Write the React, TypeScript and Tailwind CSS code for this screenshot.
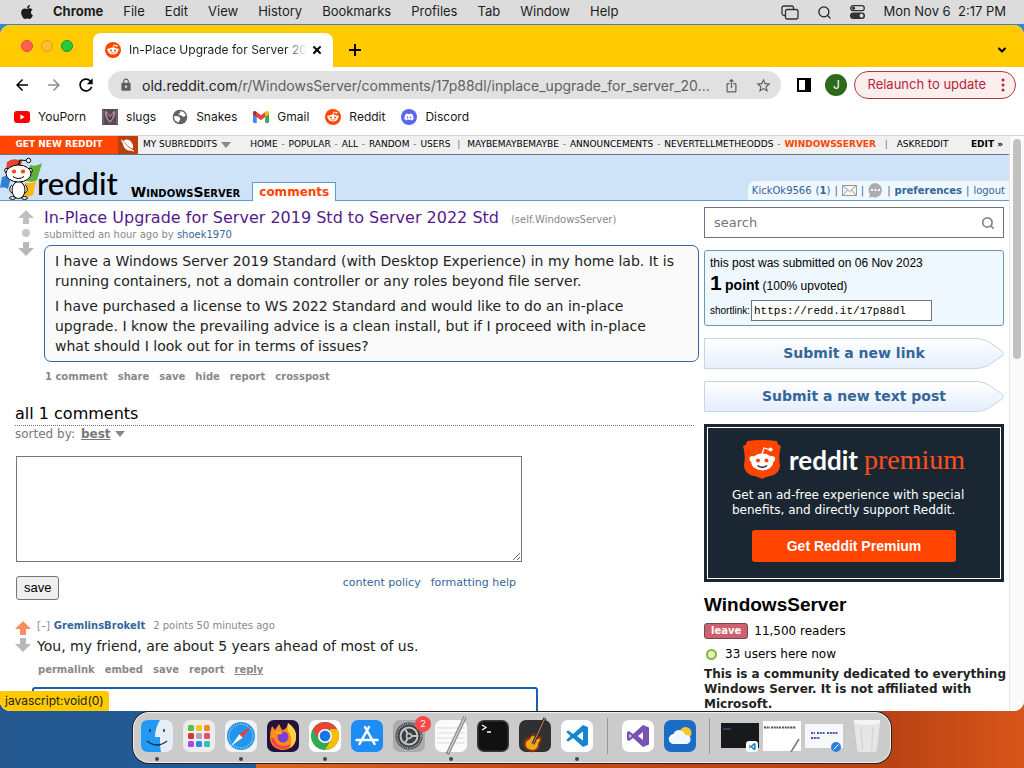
import type { ReactNode } from 'react'
import { ChevronDown, Search, X } from 'lucide-react'
import { FaApple, FaDiscord } from 'react-icons/fa'
import {
  MdArrowBack,
  MdArrowForward,
  MdIosShare,
  MdLock,
  MdRefresh,
  MdStarBorder,
} from 'react-icons/md'

const MENUS = [
  'File',
  'Edit',
  'View',
  'History',
  'Bookmarks',
  'Profiles',
  'Tab',
  'Window',
  'Help',
]

function RedditIcon({ className }: { className?: string }) {
  return (
    <svg viewBox="0 0 16 16" className={className} aria-hidden="true">
      <circle cx="8" cy="8" r="8" fill="#ff4500" />
      <path
        d="M8 6 8.8 3l2.4.6"
        fill="none"
        stroke="#fff"
        strokeWidth=".8"
      />
      <circle cx="11.500" cy="3.700" r="1" fill="#fff" />
      <circle cx="3.500" cy="7.700" r="1.300" fill="#fff" />
      <circle cx="12.500" cy="7.700" r="1.300" fill="#fff" />
      <ellipse cx="8" cy="9" rx="5" ry="3.500" fill="#fff" />
      <circle cx="6" cy="8.400" r="1" fill="#ff4500" />
      <circle cx="10" cy="8.400" r="1" fill="#ff4500" />
      <path
        d="M5.8 10.5q2.2 1.4 4.4 0"
        fill="none"
        stroke="#ff4500"
        strokeWidth=".7"
      />
    </svg>
  )
}

function MenuBar() {
  return (
    <header className="flex h-6 shrink-0 items-center bg-[#dcdcdc] pr-[18px] pl-[19px] text-[13px] text-[#1c1c1c]">
      <FaApple className="h-4 w-4" />
      <nav className="flex items-center gap-5 pl-[18px]">
        <button type="button" className="font-bold">
          Chrome
        </button>
        {MENUS.map((name) => (
          <button key={name} type="button">
            {name}
          </button>
        ))}
      </nav>
      <div className="ml-auto flex items-center gap-[18px]">
        <svg viewBox="0 0 18 15" className="h-[15px] w-[18px]" fill="none" stroke="#333" strokeWidth="1.3" aria-hidden="true">
          <path d="M4 10.5H3a2 2 0 0 1-2-2V3a2 2 0 0 1 2-2h7.500a2 2 0 0 1 2 2v1" />
          <rect x="4.500" y="4.500" width="12.500" height="9.500" rx="2" />
        </svg>
        <Search className="h-[15px] w-[15px]" />
        <svg viewBox="0 0 15 14" className="h-[14px] w-[15px]" aria-hidden="true">
          <rect x=".7" y=".7" width="13.600" height="5" rx="2.500" fill="none" stroke="#333" strokeWidth="1.300" />
          <circle cx="3.500" cy="3.200" r="1.600" fill="#333" />
          <rect x="0" y="7.500" width="15" height="6.500" rx="3.200" fill="#333" />
          <circle cx="11.500" cy="10.700" r="1.900" fill="#ddd" />
        </svg>
        <span className="whitespace-pre">Mon Nov 6  2:17 PM</span>
      </div>
    </header>
  )
}

function TabStrip() {
  return (
    <div className="flex h-[42px] items-end bg-[#ffcb00]">
      <div className="flex items-center gap-2 self-center pl-[21px]">
        <span className="h-3 w-3 rounded-full border border-[#e2453d] bg-[#ff5f57]" />
        <span className="h-3 w-3 rounded-full border border-[#e79b1d] bg-[#febc2e]" />
        <span className="h-3 w-3 rounded-full border border-[#159a26] bg-[#28c840]" />
      </div>
      <div className="ml-5 flex h-[34px] w-60 items-center rounded-t-lg bg-white pr-[10px] pl-3 text-xs text-[#1f2022]">
        <RedditIcon className="h-4 w-4 shrink-0" />
        <span className="ml-2 min-w-0 flex-1 whitespace-nowrap [mask-image:linear-gradient(to_right,black_88%,transparent)]">
          In-Place Upgrade for Server 20
        </span>
        <button type="button" aria-label="Close tab" className="ml-1">
          <X className="h-3 w-3 text-black" strokeWidth={4} />
        </button>
      </div>
      <button type="button" aria-label="New tab" className="mb-[11px] ml-4">
        <svg viewBox="0 0 12 12" className="h-3 w-3" aria-hidden="true">
          <path d="M6 0v12M0 6h12" stroke="#000" strokeWidth="2" />
        </svg>
      </button>
      <button type="button" aria-label="Search tabs" className="mr-4 mb-[11px] ml-auto">
        <ChevronDown className="h-3 w-3 text-black" strokeWidth={4} />
      </button>
    </div>
  )
}

function Toolbar() {
  return (
    <div className="flex h-9 items-center pr-2 pl-[13px]">
      <button type="button" aria-label="Back" className="mr-[14px]">
        <MdArrowBack className="h-[18px] w-[18px] text-black" />
      </button>
      <button type="button" aria-label="Forward" className="mr-[13px]">
        <MdArrowForward className="h-[18px] w-[18px] text-[#8d8d8d]" />
      </button>
      <button type="button" aria-label="Reload">
        <MdRefresh className="h-5 w-5 text-black" />
      </button>
      <div className="ml-3 flex h-7 min-w-0 flex-1 items-center rounded-full bg-[#e1e1e1] pr-[9px] pl-[11px] text-[#5f6062]">
        <MdLock className="h-[14px] w-[14px] shrink-0" />
        <p className="min-w-0 flex-1 truncate pl-[9px] text-[14px]">
          <span className="text-[#202124]">old.reddit.com</span>
          /r/WindowsServer/comments/17p88dl/inplace_upgrade_for_server_20...
        </p>
        <button type="button" aria-label="Share">
          <MdIosShare className="h-[15px] w-[15px]" />
        </button>
        <button type="button" aria-label="Bookmark this tab" className="ml-4">
          <MdStarBorder className="h-[17px] w-[17px]" />
        </button>
      </div>
      <button type="button" aria-label="Side panel" className="ml-4">
        <svg viewBox="0 0 14 14" className="h-[14px] w-[14px]" aria-hidden="true">
          <path d="M0 0h14v14H0zM2 2v10h6V2z" fill="#000" fillRule="evenodd" />
        </svg>
      </button>
      <button type="button" className="ml-[14px] h-[22px] w-[22px] rounded-full bg-[#2d6a1e] text-xs text-white">
        J
      </button>
      <button type="button" className="ml-[7px] flex h-7 items-center rounded-full border border-[#b93345] bg-[#fdeeee] pr-[10px] pl-[12px] text-[13px] text-[#b3263a]">
        Relaunch to update
        <svg viewBox="0 0 4 14" className="ml-[15px] h-[14px] w-1" fill="#b3263a" aria-hidden="true">
          <circle cx="2" cy="2" r="1.500" />
          <circle cx="2" cy="7" r="1.500" />
          <circle cx="2" cy="12" r="1.500" />
        </svg>
      </button>
    </div>
  )
}

function Bookmark({ label, children }: { label: string; children: ReactNode }) {
  return (
    <a href="#" className="flex items-center gap-2">
      {children}
      {label}
    </a>
  )
}

function Bookmarks() {
  return (
    <nav className="flex h-[33px] items-center gap-4 border-b border-[#d4d4d4] pb-1 pl-[14px] text-xs text-[#161616]">
      <Bookmark label="YouPorn">
        <svg viewBox="0 0 16 12" className="h-3 w-4" aria-hidden="true">
          <rect width="16" height="12" rx="3" fill="#f00" />
          <path d="m6.400 3.500 4.300 2.500-4.300 2.500z" fill="#fff" />
        </svg>
      </Bookmark>
      <Bookmark label="slugs">
        <svg viewBox="0 0 16 16" className="h-4 w-4" aria-hidden="true">
          <rect width="16" height="16" fill="#5b4a55" />
          <path d="M3 2c2 0 3 2 5 5 2-3 3-5 5-5 1 4-2 9-5 12C5 11 2 6 3 2z" fill="#a98c98" />
          <path d="M5 4c0 3 1 6 3 8 2-2 3-5 3-8L8 9z" fill="#4b3440" />
          <path d="M1 1v14M15 1v14" stroke="#857680" />
        </svg>
      </Bookmark>
      <Bookmark label="Snakes">
        <svg viewBox="0 0 16 16" className="h-4 w-4" aria-hidden="true">
          <circle cx="8" cy="8" r="7.300" fill="#5f6368" />
          <path d="M2 7.500c3-1 5 0 6 1.500s-1 2-1 4.500C4 13 2 11 2 7.500z" fill="#fff" />
          <path d="M8 2.200c3 0 5 1.500 5.800 4.300-1.500 2-3.300 1-4.300.2S7 6 6 5c1.500-.3 2.500-1 2-2.800z" fill="#fff" />
        </svg>
      </Bookmark>
      <Bookmark label="Gmail">
        <svg viewBox="0 0 16 12" className="h-3 w-4" aria-hidden="true">
          <path d="M0 2v8.500c0 .8.500 1.500 1.300 1.500h2.500V5z" fill="#4285f4" />
          <path d="M16 2v8.500c0 .8-.5 1.500-1.300 1.500h-2.500V5z" fill="#34a853" />
          <path d="M12.200 1v5L16 3V1.800C16 0 14.300-.4 13.200.4z" fill="#fbbc04" />
          <path d="M3.800 1 8 4.200 12.200 1v5L8 9.200 3.800 6z" fill="#ea4335" />
          <path d="M0 1.800V3l3.800 3V1l-.9-.6C1.700-.4 0 0 0 1.800z" fill="#c5221f" />
        </svg>
      </Bookmark>
      <Bookmark label="Reddit">
        <RedditIcon className="h-4 w-4" />
      </Bookmark>
      <Bookmark label="Discord">
        <span className="flex h-4 w-4 items-center justify-center rounded-full bg-[#5865f2] text-white">
          <FaDiscord className="h-[10px] w-[10px]" />
        </span>
      </Bookmark>
    </nav>
  )
}

function Dash() {
  return <span className="px-px text-gray-500"> - </span>
}

function SubredditBar() {
  return (
    <div className="flex h-[19px] items-center border-b border-gray-500 bg-[#f0f0f0] text-[9px] whitespace-nowrap text-black uppercase">
      <a href="#" className="flex h-full w-[118px] items-center justify-center bg-[#ff4500] font-bold text-white">
        get new reddit
      </a>
      <span className="flex h-full w-5 items-center justify-center bg-[#b8400f]">
        <svg viewBox="0 0 16 16" className="h-4 w-4" aria-hidden="true">
          <ellipse cx="8" cy="8" rx="4.500" ry="6" transform="rotate(-35 8 8)" fill="#fff" />
          <path d="M2 2.500C1 5 9 13 14 14" fill="none" stroke="#fff" strokeWidth="1.200" />
          <path d="M4.500 5.500c2 3 5 5.500 8 6.500" fill="none" stroke="#d9511f" strokeWidth=".9" />
        </svg>
      </span>
      <button type="button" className="flex items-center gap-1 pl-[5px] uppercase">
        my subreddits
        <svg viewBox="0 0 10 6" className="h-[6px] w-[10px]" fill="#888" aria-hidden="true">
          <path d="M0 0h10L5 6z" />
        </svg>
      </button>
      <nav className="min-w-0 flex-1 overflow-hidden pl-[19px] whitespace-pre">
        <a href="#">home</a>
        <Dash />
        <a href="#">popular</a>
        <Dash />
        <a href="#">all</a>
        <Dash />
        <a href="#">random</a>
        <Dash />
        <a href="#">users</a>
        <span className="px-1 text-gray-500"> | </span>
        <a href="#">maybemaybemaybe</a>
        <Dash />
        <a href="#">announcements</a>
        <Dash />
        <a href="#">nevertellmetheodds</a>
        <Dash />
        <a href="#" className="font-bold text-[#ff4500]">
          windowsserver
        </a>
        <span className="px-[6px] text-gray-500"> | </span>
        <a href="#">askreddit</a>
      </nav>
      <a href="#" className="pr-[6px] pl-3 font-bold">
        edit »
      </a>
    </div>
  )
}

function SnooLogo() {
  return (
    <svg viewBox="0 0 42 44" className="h-11 w-[42px]" aria-hidden="true">
      <path d="M7 6q6-5 15-1l-2 9q-8-2-14 1z" fill="#e8432c" />
      <path d="M30 9q6 2 12-2l-5 17q-4 3-10 1z" fill="#5fae3a" />
      <path d="M2 21q5-2 9 0l-3 12q-4-3-8-1z" fill="#2f7fd2" />
      <path d="M25 26q5 3 11-1l-3 14q-4 3-9 1z" fill="#fdb813" />
      <path d="M18.500 9 20 4l6 .5" fill="none" stroke="#000" strokeWidth="1.100" />
      <circle cx="28.500" cy="4.500" r="2.200" fill="#fff" stroke="#000" />
      <ellipse cx="12.500" cy="42" rx="3" ry="1.400" fill="#fff" stroke="#000" />
      <ellipse cx="24.500" cy="42" rx="3" ry="1.400" fill="#fff" stroke="#000" />
      <path d="M12 29c-3 2-3 7 0 8M25 29c3 2 3 7 0 8" fill="#fff" stroke="#000" />
      <ellipse cx="18.500" cy="34" rx="6.500" ry="8.500" fill="#fff" stroke="#000" />
      <circle cx="7" cy="14.500" r="2.300" fill="#fff" stroke="#000" />
      <circle cx="30" cy="14.500" r="2.300" fill="#fff" stroke="#000" />
      <ellipse cx="18.500" cy="17.500" rx="12.500" ry="8.500" fill="#fff" stroke="#000" />
      <circle cx="14" cy="15.500" r="2.100" fill="#ff4500" />
      <circle cx="23" cy="15.500" r="2.100" fill="#ff4500" />
      <path d="M13 20.500q5.500 4 11 0" fill="none" stroke="#000" />
    </svg>
  )
}

function RedditHeader() {
  return (
    <div className="flex h-[46px] items-end border-b border-[#5f99cf] bg-[#cee3f8]">
      <a href="#" className="flex items-end">
        <SnooLogo />
        <span className="-ml-[5px] font-['Lato','Open_Sans',sans-serif] text-[31px] leading-[34px] font-medium text-black">
          reddit
        </span>
      </a>
      <a href="#" className="ml-[13px] text-[14px] leading-[16px] font-bold text-black [font-variant:small-caps]">
        WindowsServer
      </a>
      <a href="#" className="-mb-px ml-3 border border-b-0 border-[#5f99cf] bg-white px-[6px] text-xs leading-[18px] font-bold text-[#ff4500]">
        comments
      </a>
      <div className="ml-auto flex h-[19px] items-center gap-1 rounded-tl-lg bg-[#eff7ff] px-1 text-[10px] text-[#369]">
        <a href="#">KickOk9566</a>
        <span>
          (<b>1</b>)
        </span>
        <span>|</span>
        <svg viewBox="0 0 15 11" className="h-[11px] w-[15px]" fill="#f6f6f6" stroke="#999" aria-hidden="true">
          <path d="M.5.5h14v10H.5zl7 6 7-6M.5 10.500l5-5.500m9 5.500-5-5.500" />
        </svg>
        <span>|</span>
        <svg viewBox="0 0 15 15" className="h-[15px] w-[15px]" aria-hidden="true">
          <path d="M7.500 0a7.200 7.200 0 1 1-3 14L1 14.500l1-3A7.200 7.200 0 0 1 7.500 0z" fill="#adadad" />
          <path d="M3 7h2m1.500 0h2M10 7h2" stroke="#fff" strokeWidth="2" />
        </svg>
        <span>|</span>
        <a href="#" className="font-bold">
          preferences
        </a>
        <span>|</span>
        <a href="#">logout</a>
      </div>
    </div>
  )
}

function VoteArrow({ down, color }: { down?: boolean; color: string }) {
  return (
    <svg viewBox="0 0 16 14" className="h-[14px] w-4" fill={color} aria-hidden="true">
      <path d={down ? 'M8 14 0 6h5V0h6v6h5z' : 'M8 0l8 8h-5v6H5V8H0z'} />
    </svg>
  )
}

function Post() {
  return (
    <article className="flex pl-[18px]">
      <div className="flex w-[26px] flex-col items-start gap-[5px] pt-px">
        <button type="button" aria-label="upvote" className="block">
          <VoteArrow color="#c0c0c0" />
        </button>
        <span className="ml-1 h-2 w-2 rounded-full bg-[#c6c6c6]" />
        <button type="button" aria-label="downvote" className="block">
          <VoteArrow down color="#b8b8b8" />
        </button>
      </div>
      <div className="min-w-0 flex-1">
        <h1 className="text-base leading-[18px] text-[#551a8b]">
          <a href="#">In-Place Upgrade for Server 2019 Std to Server 2022 Std</a>
          <span className="ml-3 text-[10px] text-[#888]">(self.WindowsServer)</span>
        </h1>
        <p className="text-[10px] leading-3 text-[#888]">
          submitted an hour ago by{' '}
          <a href="#" className="text-[#369]">
            shoek1970
          </a>
        </p>
        <div className="mt-1 space-y-[5px] rounded-[7px] border border-[#369] bg-[#fafafa] px-[10px] py-[5px] text-[14px] leading-5 text-[#222]">
          <p>
            I have a Windows Server 2019 Standard (with Desktop Experience) in my home lab. It is
            running containers, not a domain controller or any roles beyond file server.
          </p>
          <p className="pr-4">
            I have purchased a license to WS 2022 Standard and would like to do an in-place upgrade.
            I know the prevailing advice is a clean install, but if I proceed with in-place what
            should I look out for in terms of issues?
          </p>
        </div>
        <div className="mt-2 flex gap-[10px] pl-px text-[10px] leading-[14px] font-bold text-[#888]">
          {['1 comment', 'share', 'save', 'hide', 'report', 'crosspost'].map((label) => (
            <a key={label} href="#">
              {label}
            </a>
          ))}
        </div>
      </div>
    </article>
  )
}

function Comments() {
  return (
    <section className="mr-[5px] ml-[15px]">
      <h2 className="mt-[19px] border-b border-dotted border-gray-500 text-base leading-[22px] text-black">
        all 1 comments
      </h2>
      <div className="flex items-center text-xs leading-4 text-[#777]">
        sorted by:
        <button type="button" className="ml-[6px] flex items-center gap-1 font-bold">
          <span className="underline">best</span>
          <svg viewBox="0 0 10 6" className="h-[6px] w-[10px]" fill="#888" aria-hidden="true">
            <path d="M0 0h10L5 6z" />
          </svg>
        </button>
      </div>
      <form className="ml-px max-w-[506px]">
        <textarea
          aria-label="comment"
          className="mt-[14px] block h-[106px] w-full border border-[#767676] bg-white p-1"
        />
        <div className="mt-[14px] flex items-start justify-between">
          <button
            type="button"
            className="h-6 rounded-[3px] border border-[#767676] bg-[#efefef] px-[7px] font-['Liberation_Sans',sans-serif] text-[13px] text-black"
          >
            save
          </button>
          <div className="flex gap-[10px] pr-[6px] text-[11px] leading-[14px] text-[#369]">
            <a href="#">content policy</a>
            <a href="#">formatting help</a>
          </div>
        </div>
      </form>
      <article className="mt-[18px] flex">
        <div className="flex w-[22px] shrink-0 flex-col gap-[3px] pt-[3px]">
          <button type="button" aria-label="upvote comment" className="block">
            <VoteArrow color="#ff8b60" />
          </button>
          <button type="button" aria-label="downvote comment" className="block">
            <VoteArrow down color="#b8b8b8" />
          </button>
        </div>
        <div>
          <p className="text-[10px] leading-4 text-[#888]">
            <span className="mr-1">[–]</span>
            <a href="#" className="font-bold text-[#369]">
              GremlinsBrokeIt
            </a>
            <span className="ml-2">2 points 50 minutes ago</span>
          </p>
          <p className="mt-[2px] text-[14px] leading-5 text-[#222]">
            You, my friend, are about 5 years ahead of most of us.
          </p>
          <div className="mt-[7px] flex gap-[10px] pl-px text-[10px] leading-[14px] font-bold text-[#888]">
            <a href="#">permalink</a>
            <a href="#">embed</a>
            <a href="#">save</a>
            <a href="#">report</a>
            <a href="#" className="underline">
              reply
            </a>
          </div>
        </div>
      </article>
      <textarea
        aria-label="reply"
        className="mt-[10px] ml-[17px] block h-[104px] w-full max-w-[506px] rounded-[3px] border-2 border-[#1a5fb0] bg-white p-1"
      />
    </section>
  )
}

function SubmitButton({ children }: { children: ReactNode }) {
  return (
    <a
      href="#"
      className="relative mt-3 flex h-[31px] items-center justify-center text-[14px] font-bold text-[#369]"
    >
      <svg viewBox="0 0 300 31" preserveAspectRatio="none" className="absolute inset-0 h-full w-full" aria-hidden="true">
        <defs>
          <linearGradient id="submit" x1="0" y1="0" x2="0" y2="1">
            <stop offset="0" stopColor="#fff" />
            <stop offset="1" stopColor="#e4eefb" />
          </linearGradient>
        </defs>
        <path
          d="M.5.5H273Q280 1 285 4l13 9q3 2.500 0 5l-13 9q-5 3-12 3.500H.5z"
          fill="url(#submit)"
          stroke="#c4d5e6"
        />
      </svg>
      <span className="relative">{children}</span>
    </a>
  )
}

function Premium() {
  return (
    <section className="mt-3 bg-[#1a2733] p-[3px] text-white">
      <div className="border border-white px-6 pt-3 pb-4">
        <div className="flex items-center justify-center gap-2">
          <svg viewBox="0 0 38 40" className="h-10 w-[38px] shrink-0" aria-hidden="true">
            <path d="M4 1Q19-1 34 1q0 4 4 5-3 9-1 19 0 9-10 11-5 1-8 3-3-2-8-3Q1 34 1 25 3 15 0 6q4-1 4-5z" fill="#ff4500" />
            <path d="M19 14 21 8l5 1.500" fill="none" stroke="#fff" strokeWidth="1.300" />
            <circle cx="27.500" cy="9.500" r="2" fill="#fff" />
            <circle cx="9.500" cy="19" r="3" fill="#fff" />
            <circle cx="29" cy="19" r="3" fill="#fff" />
            <ellipse cx="19.300" cy="22" rx="11" ry="8.500" fill="#fff" />
            <circle cx="15" cy="20.500" r="2" fill="#ff4500" />
            <circle cx="23.500" cy="20.500" r="2" fill="#ff4500" />
            <path d="M14.500 25.500q4.800 3.500 9.600 0" fill="none" stroke="#1a2733" strokeWidth="1.300" />
          </svg>
          <span className="font-['Lato',sans-serif] text-[26px] leading-10 font-bold">reddit</span>
          <span className="-ml-[2px] font-['Liberation_Serif',serif] text-[28px] leading-10 text-[#ff4f1f]">
            premium
          </span>
        </div>
        <p className="mt-2 text-xs leading-[15px]">
          Get an ad-free experience with special benefits, and directly support Reddit.
        </p>
        <button
          type="button"
          className="mx-auto mt-3 block h-8 w-[204px] rounded-[3px] bg-[#ff4500] font-['Liberation_Sans',sans-serif] text-[14px] font-bold"
        >
          Get Reddit Premium
        </button>
      </div>
    </section>
  )
}

function Sidebar() {
  return (
    <aside className="mr-[5px] ml-[5px] w-[300px] shrink-0 pt-[6px] text-black">
      <div className="flex h-[31px] items-center border border-gray-500 bg-white pr-2 pl-[9px]">
        <input
          type="text"
          aria-label="search"
          placeholder="search"
          className="min-w-0 flex-1 text-[13px] outline-none placeholder:text-[#757575]"
        />
        <Search className="h-[14px] w-[14px] text-[#888]" strokeWidth={3} />
      </div>
      <div className="mt-3 h-[76px] rounded-[3px] border border-[#6f97ad] bg-[#eff7ff] px-[5px] pt-1 font-['Liberation_Sans',sans-serif] text-xs">
        <p className="leading-4">this post was submitted on 06 Nov 2023</p>
        <p className="leading-6">
          <b className="text-[21px]">1</b> <b className="text-[14px]">point</b> (100% upvoted)
        </p>
        <div className="mt-[2px] flex items-center">
          <label htmlFor="shortlink" className="text-[10px]">
            shortlink:
          </label>
          <input
            id="shortlink"
            type="text"
            readOnly
            value="https://redd.it/17p88dl"
            className="ml-px h-[21px] w-[181px] border border-gray-500 bg-white px-[2px] font-['Liberation_Mono',monospace] text-[11px] text-black"
          />
        </div>
      </div>
      <SubmitButton>Submit a new link</SubmitButton>
      <SubmitButton>Submit a new text post</SubmitButton>
      <Premium />
      <h2 className="mt-[11px] font-['Liberation_Sans',sans-serif] text-[19px] leading-6 font-bold">
        WindowsServer
      </h2>
      <div className="mt-[6px] flex items-center gap-[6px] text-xs leading-4">
        <button
          type="button"
          className="h-4 rounded-[3px] border border-[#6b4a4f] bg-[#cf6070] px-[6px] text-[10px] leading-[14px] font-bold text-white"
        >
          leave
        </button>
        11,500 readers
      </div>
      <p className="mt-[7px] flex items-center gap-2 pl-[2px] text-xs leading-4">
        <span className="h-[11px] w-[11px] rounded-full border-2 border-[#85b24a] bg-[#dff5b5]" />
        33 users here now
      </p>
      <p className="-mr-[5px] mt-[5px] text-xs leading-[15px] font-bold text-[#222]">
        This is a community dedicated to everything Windows Server. It is not affiliated with
        Microsoft.
      </p>
    </aside>
  )
}

function RedditPage() {
  return (
    <div className="flex min-h-0 flex-1 font-['DejaVu_Sans',sans-serif]">
      <main className="min-w-0 flex-1 overflow-hidden bg-white">
        <SubredditBar />
        <RedditHeader />
        <div className="flex">
          <div className="min-w-0 flex-1 pt-2">
            <Post />
            <Comments />
          </div>
          <Sidebar />
        </div>
      </main>
      <div className="w-[15px] shrink-0 border-l border-[#e8e8e8] bg-[#fafafa] px-[3px] pt-[3px]">
        <div className="h-[220px] rounded-full bg-[#c1c1c1]" />
      </div>
    </div>
  )
}

function DockItem({ running, children }: { running?: boolean; children: ReactNode }) {
  return (
    <button type="button" className="relative h-8 w-8 shrink-0">
      {children}
      {running && (
        <span className="absolute -bottom-[9px] left-[14px] h-1 w-1 rounded-full bg-[#444]" />
      )}
    </button>
  )
}

function Tile({ fill, children }: { fill: string; children: ReactNode }) {
  return (
    <svg viewBox="0 0 32 32" className="h-8 w-8 overflow-visible" aria-hidden="true">
      <rect width="32" height="32" rx="7" fill={fill} />
      {children}
    </svg>
  )
}

const LAUNCHPAD = [
  '#55c143', '#f5c51c', '#ee8c27',
  '#d8323c', '#a9a9b3', '#e64d6c',
  '#a24de0', '#2f87ee', '#31c1b5',
]

const CODE_LOGO =
  'M22 5l5 2.300v17.400L22 27 12 18l-4.500 3.600L5 20.300l4.500-4.300L5 11.700l2.500-1.300L12 14zm0 6.500L16 16l6 4.500z'

function Thumbnail({ children }: { children: ReactNode }) {
  return (
    <button type="button" className="h-8 w-[38px] shrink-0">
      <svg viewBox="0 0 38 32" className="h-8 w-[38px]" aria-hidden="true">
        {children}
      </svg>
    </button>
  )
}

function Dock() {
  return (
    <footer className="flex h-[57px] shrink-0 items-start justify-center pt-px">
      <div className="flex h-[51px] items-center gap-[10px] rounded-2xl border border-white/70 bg-[#cbcbcb] px-[7px] pb-[3px] ring-1 ring-[#222]">
        <DockItem running>
          <Tile fill="#e6edf4">
            <path d="M7 0h12q-5 8-5 17h5q-.5 8 1 15H7q-7 0-7-7V7q0-7 7-7z" fill="#2299f2" />
            <path d="M9 9v3M23 9v3" stroke="#14304d" strokeWidth="1.500" />
            <path d="M6 21q10 8 20 0" fill="none" stroke="#14304d" strokeWidth="1.300" />
          </Tile>
        </DockItem>
        <DockItem>
          <Tile fill="#ececec">
            {LAUNCHPAD.map((color, i) => (
              <rect
                key={color}
                x={5 + (i % 3) * 8}
                y={5 + Math.floor(i / 3) * 8}
                width="6"
                height="6"
                rx="1.500"
                fill={color}
              />
            ))}
          </Tile>
        </DockItem>
        <DockItem running>
          <Tile fill="#f2f2f2">
            <circle cx="16" cy="16" r="14" fill="#2294e9" />
            <circle cx="16" cy="16" r="12" fill="none" stroke="#cfe7fb" strokeWidth="1.500" strokeDasharray=".6 1.300" />
            <path d="M26 6 14.300 14.300l3.400 3.400z" fill="#e5413c" />
            <path d="M6 26l8.300-11.700 3.400 3.400z" fill="#f4f4f4" />
          </Tile>
        </DockItem>
        <DockItem>
          <Tile fill="#23123f">
            <path d="M5 6l3 4 4-6 3 6q5 0 6-7 9 6 8 15c0 7-6 12-13 12S3 25 3 18q0-7 2-12z" fill="#ff8a1e" />
            <path d="M21 3q9 6 8 15c-.5 5-3 8-6 10 2-7 2-12-2-17q-1-3 0-8z" fill="#ffd43b" />
            <path d="M4 18c1 7 6 11 12 11 4 0 7-2 8-5-7 4-15 2-17-6z" fill="#f6404c" />
            <circle cx="16" cy="17" r="5.500" fill="#7a3fd0" />
            <path d="M8 12q5-2 8 1-3 2-6 1z" fill="#ffab27" />
          </Tile>
        </DockItem>
        <DockItem running>
          <Tile fill="#fff">
            <circle cx="16" cy="16" r="14" fill="#34a853" />
            <path d="M3.900 9A14 14 0 0 1 28.100 9H16l-6 10.500z" fill="#ea4335" />
            <path d="M28.100 9A14 14 0 0 1 16 30l6.500-11.500L21 9z" fill="#fbbc04" />
            <circle cx="16" cy="16" r="7" fill="#fff" />
            <circle cx="16" cy="16" r="5.400" fill="#1a73e8" />
          </Tile>
        </DockItem>
        <DockItem>
          <Tile fill="#1d8df5">
            <path d="M14 7l9.500 17M18 7 8.500 24M5.500 20h14M22 20h4.500" stroke="#fff" strokeWidth="2.500" strokeLinecap="round" />
          </Tile>
        </DockItem>
        <DockItem>
          <Tile fill="#a9abad">
            <circle cx="16" cy="16" r="13.500" fill="#3c3e40" />
            <circle cx="16" cy="16" r="12" fill="none" stroke="#b5b7b9" strokeWidth="1.500" strokeDasharray="1 .8" />
            <circle cx="16" cy="16" r="8.500" fill="none" stroke="#c3c5c7" strokeWidth="2" />
            <path d="M16 16h9M16 16l-4.500-8M16 16l-4.500 8" stroke="#c3c5c7" strokeWidth="2" />
            <circle cx="16" cy="16" r="2.500" fill="#3c3e40" stroke="#c3c5c7" strokeWidth="1.500" />
          </Tile>
          <span className="absolute -top-1 -right-[6px] h-4 w-4 rounded-full bg-[#fb4a48] text-center text-[9px] leading-4 text-white">
            2
          </span>
        </DockItem>
        <DockItem running>
          <Tile fill="#fbfbfb">
            <path d="M2 8h28M2 13h28M2 18h28M2 23h28" stroke="#d9d9d9" />
            <path d="M12.500 34 30-3" stroke="#6f6f6f" strokeWidth="3.500" />
            <path d="M13 33 30-3" stroke="#c8c8c8" strokeWidth="1.800" />
          </Tile>
        </DockItem>
        <DockItem>
          <Tile fill="#39393b">
            <rect x="1.500" y="1.500" width="29" height="29" rx="6" fill="#111" />
            <path d="M5 5l4 2.500L5 10M10 12h4" fill="none" stroke="#fff" strokeWidth="1.300" />
          </Tile>
        </DockItem>
        <DockItem>
          <Tile fill="#303032">
            <path d="M12 15c2-2 5-3 6 0 1 2 4 0 5 2 1 3-2 4-2 8-1 6-7 9-12 6S3 22 6 19c2-2 5-1 6-4z" fill="#7c3610" />
            <path d="M12 17c2-2 4-1 5 1s3 0 4 1-2 3-2 6c-1 5-5 6-9 4s-4-6-2-8 3-1 4-4z" fill="#f4a51d" />
            <path d="M14 24 26-2" stroke="#3b2920" strokeWidth="3" />
            <path d="M14 24 26-2" stroke="#caa788" strokeWidth=".8" />
          </Tile>
        </DockItem>
        <DockItem running>
          <Tile fill="#fff">
            <path d={CODE_LOGO} fill="#1684cf" fillRule="evenodd" />
          </Tile>
        </DockItem>
        <span className="mx-1 h-9 w-px bg-[#989898]" />
        <DockItem>
          <Tile fill="#fff">
            <path d="M21 5l6 2.500v17L21 27 11 18l-4 3-2-1.200V12l2-1 4 3zm0 7-5 4 5 4zM7.500 14v4l2-2z" fill="#7952b3" fillRule="evenodd" />
          </Tile>
        </DockItem>
        <DockItem>
          <Tile fill="#1b6cc4">
            <circle cx="21.500" cy="13" r="6" fill="#fbc72d" />
            <path d="M10 24a5 5 0 0 1-.5-10 6 6 0 0 1 11.500 1 4.600 4.600 0 0 1 2 9z" fill="#f2f8ff" />
          </Tile>
        </DockItem>
        <span className="mx-[3px] h-9 w-px bg-[#989898]" />
        <div className="-ml-[2px] flex items-center gap-1">
          <Thumbnail>
            <rect y="3" width="38" height="25" fill="#18191c" />
            <path d="M2 9h8" stroke="#3c6b92" />
            <rect x="25" y="21" width="12" height="11" rx="3" fill="#fff" />
            <g transform="translate(26 21.500) scale(.32)">
              <path d={CODE_LOGO} fill="#1684cf" fillRule="evenodd" />
            </g>
          </Thumbnail>
          <Thumbnail>
            <rect y="1" width="38" height="30" fill="#fff" />
            <path d="M1 7.500h6m1 0h10m1 0h14" stroke="#555" strokeWidth="2" strokeDasharray="2 .7" />
            <path d="M28 32l8-13" stroke="#777" strokeWidth="1.500" />
          </Thumbnail>
          <Thumbnail>
            <rect y="4" width="38" height="24" fill="#f6f8fb" />
            <path d="M6 13h4m2 0h8m2 0h11M6 18h9" stroke="#4a55a8" strokeWidth="1.800" strokeDasharray="2 .8" />
            <circle cx="31" cy="27" r="5" fill="#2d7fd8" />
            <path d="m28.500 29.500 5-5" stroke="#fff" />
          </Thumbnail>
        </div>
        <button type="button" aria-label="Trash" className="-ml-[2px] h-8 w-8 shrink-0">
          <svg viewBox="0 0 32 36" className="h-8 w-8 overflow-visible" aria-hidden="true">
            <path d="M1 0h30l-4 34q-.5 2-3 2H8q-2.500 0-3-2z" fill="#e6e6e6" />
            <path d="M1 0h30l-1 4Q16 7 2 4z" fill="#f4f4f4" />
            <path d="M9 7l2 27M23 7l-2 27" stroke="#d5d5d5" strokeWidth="1.500" />
          </svg>
        </button>
      </div>
    </footer>
  )
}

export default function App() {
  return (
    <div className="flex h-screen flex-col overflow-hidden bg-[linear-gradient(180deg,#3a86cc_10%,transparent_10%),linear-gradient(90deg,#24588f_0%,#235b9a_25%,#dc661e_25%,#c8481a_50%,#b84314_87%,#d8551a_100%)] font-['Inter',sans-serif]">
      <MenuBar />
      <div className="relative mt-px flex min-h-0 flex-1 flex-col overflow-hidden rounded-[10px] bg-white">
        <TabStrip />
        <Toolbar />
        <Bookmarks />
        <RedditPage />
        <div className="absolute bottom-0 left-0 rounded-tr-[3px] bg-[#ffcb00] px-[5px] text-xs leading-5 text-[#222]">
          javascript:void(0)
        </div>
      </div>
      <Dock />
    </div>
  )
}
